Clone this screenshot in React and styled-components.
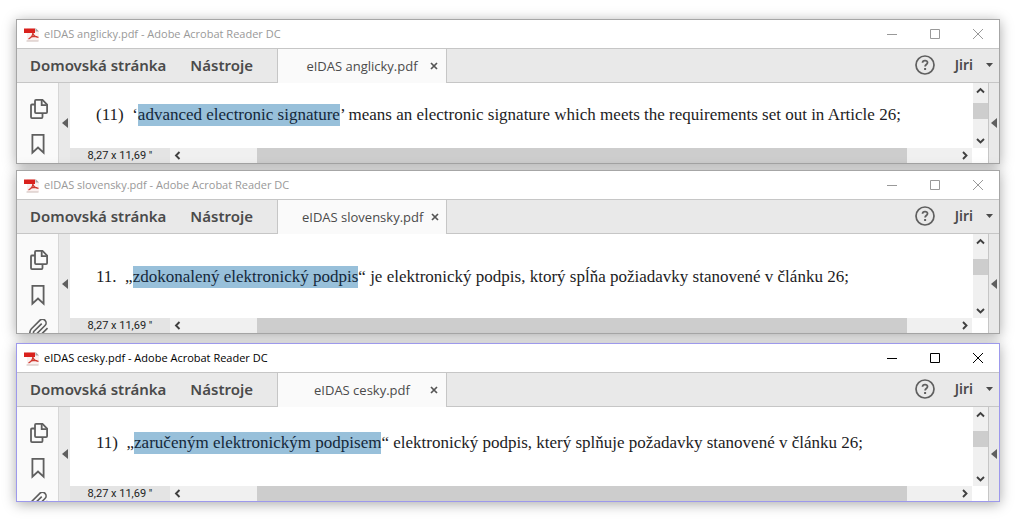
import React from 'react';
import styled, {createGlobalStyle, css} from 'styled-components';

const ui = '"Noto Sans", "Open Sans", sans-serif';
const uiNarrow = '"Open Sans", "Noto Sans", sans-serif';
const serif = '"Liberation Serif", "Times New Roman", serif';

const GlobalStyle = createGlobalStyle`
  * {
    box-sizing: border-box;
  }

  body {
    margin: 0;
    background: #fff;
    font-family: ${ui};
  }

  button {
    padding: 0;
    border: 0;
    background: none;
    color: inherit;
    font: inherit;
  }
`;

const Desktop = styled.main`
  display: flex;
  flex-direction: column;
  padding: 19px 24px 24px 16px;
`;

const Window = styled.section`
  display: flex;
  flex-direction: column;
  margin-bottom: ${props => props.$gap || 0}px;
  border: 1px solid ${props => (props.$active ? '#9d99ec' : '#a6a6a6')};
  background: #fff;
  box-shadow: 0 2px 12px rgba(0, 0, 0, 0.34);
`;

const TitleBar = styled.header`
  display: flex;
  align-items: center;
  height: 28px;
  padding-left: 7px;
  color: ${props => (props.$active ? '#000' : '#999')};
`;

const Title = styled.h1`
  flex: 1;
  margin: 0 0 0 3px;
  font: 400 11px/16px ${uiNarrow};
  white-space: nowrap;
`;

const ControlButton = styled.button`
  display: flex;
  align-items: center;
  justify-content: center;
  width: 43px;
  height: 28px;
`;

const MenuBar = styled.nav`
  display: flex;
  height: 35px;
  border-top: 1px solid #c6c6c6;
  background: #e9e9e9;
  color: #4b4b4b;
`;

const MenuGroup = styled.div`
  display: flex;
  gap: 24px;
  align-items: center;
  padding: 0 24px 2px 13px;
  border-bottom: 1px solid #c6c6c6;
`;

const MenuButton = styled.button`
  font: 600 15px/20px ${ui};
  white-space: nowrap;
`;

const Tab = styled.div`
  display: grid;
  grid-template-columns: 24px 1fr 24px;
  align-items: center;
  width: 170px;
  border: solid #c6c6c6;
  border-width: 0 1px;
  background: #fafafa;
`;

const TabLabel = styled.button`
  grid-column: 2;
  font: 13px/20px ${uiNarrow};
  white-space: nowrap;
`;

const TabClose = styled.button`
  display: flex;
  justify-content: center;
`;

const Account = styled.div`
  display: flex;
  flex: 1;
  gap: 20px;
  align-items: center;
  justify-content: flex-end;
  padding: 0 6px 1px 0;
  border-bottom: 1px solid #c6c6c6;
`;

const HelpButton = styled.button`
  display: flex;
`;

const UserButton = styled.button`
  display: flex;
  gap: 13px;
  align-items: center;
  font: 600 14px/20px ${ui};
`;

const Body = styled.div`
  display: flex;
`;

// Sized by the document beside it, so tools that don't fit are cut off.
const ToolRail = styled.aside`
  display: flex;
  flex-direction: column;
  gap: 13px;
  align-items: flex-start;
  width: 42px;
  padding: 15px 0 0 12px;
  overflow: hidden;
  contain: size;
  border-right: 1px solid #d6d6d6;
  background: #fafafa;
  color: #5f5f5f;
`;

const ToolButton = styled.button`
  display: flex;
  flex-shrink: 0;
`;

const PanelToggle = styled.button`
  display: flex;
  align-items: center;
  justify-content: center;
  width: 11px;
  background: #e9e9e9;
  color: #5f5f5f;

  ${props =>
    props.$bordered &&
    css`
      border-left: 1px solid #c6c6c6;
    `};
`;

const Viewer = styled.div`
  display: flex;
  flex: 1;
  flex-direction: column;
  min-width: 0;
`;

const Document = styled.div`
  display: flex;
`;

const Page = styled.p`
  flex: 1;
  min-width: 0;
  margin: 0;
  padding: ${props => props.$top}px 0 ${props => props.$bottom}px 26px;
  overflow: hidden;
  color: #1c1c24;
  font: 17px/22px ${serif};
  white-space: pre;
`;

const Highlight = styled.mark`
  display: inline-block;
  background: #98c0da;
  color: #14283a;
`;

const VerticalScroll = styled.div`
  display: flex;
  flex-direction: column;
  width: 15px;
  background: #f0f0f0;
`;

const VerticalTrack = styled.div`
  flex: 1;
  padding-top: ${props => props.$offset}px;
`;

const VerticalThumb = styled.div`
  height: 16px;
  background: #cdcdcd;
`;

const ScrollButton = styled.button`
  display: flex;
  align-items: center;
  justify-content: center;
  width: 15px;
  height: 15px;
  color: #404040;
`;

const StatusRow = styled.div`
  display: flex;
  padding-right: 16px;
`;

const PageSize = styled.div`
  width: 100px;
  background: #e4e4e4;
  color: #222;
  font: 11px/15px Roboto, sans-serif;
  text-align: center;
  white-space: nowrap;
`;

const HorizontalScroll = styled.div`
  display: flex;
  flex: 1;
  background: #f0f0f0;
`;

const HorizontalTrack = styled.div`
  display: grid;
  flex: 1;
  grid-template-columns: 72fr 650fr 50fr;
`;

const HorizontalThumb = styled.div`
  grid-column: 2;
  background: #cdcdcd;
`;

const PdfIcon = () => (
  <svg width="17" height="15" viewBox="0 0 17 15" fill="none">
    <path d="M3 1h8.500l3.500 3.500V14H3z" fill="#fbf1f0" />
    <path d="M2.500 14h12" stroke="#cdbcb8" />
    <path d="M11.500 1l3.500 3.500h-3.500z" fill="#a9a3a3" />
    <path d="M0 1.500h11v4.500H0z" fill="#d9201c" />
    <path
      d="M4.500 12c2.200-1.200 4.300-4 4.300-6 .5 2.200 2.700 4 5.700 4.300M6.200 10.500c2-1 4.500-1.400 7-1"
      stroke="#d0382f"
      strokeWidth="1.200"
    />
  </svg>
);

const MinimizeIcon = () => (
  <svg width="10" height="10" viewBox="0 0 10 10" stroke="currentColor">
    <path d="M0 5.500h10" />
  </svg>
);

const MaximizeIcon = () => (
  <svg width="10" height="10" viewBox="0 0 10 10" fill="none" stroke="currentColor">
    <path d="M.5.5h9v9h-9z" />
  </svg>
);

const CloseIcon = () => (
  <svg width="10" height="10" viewBox="0 0 10 10" stroke="currentColor">
    <path d="M0 0l10 10M10 0L0 10" />
  </svg>
);

const TabCloseIcon = () => (
  <svg width="8" height="8" viewBox="0 0 8 8" stroke="#555" strokeWidth="1.700">
    <path d="M1 1l6 6M7 1L1 7" />
  </svg>
);

const HelpIcon = () => (
  <svg width="20" height="20" viewBox="0 0 20 20" fill="none" stroke="#5f5f5f">
    <circle cx="10" cy="10" r="9" strokeWidth="1.700" />
    <path d="M7.500 7.700c.2-3 5.200-2.700 5 .1-.1 1.800-2.400 1.800-2.400 3.700" strokeWidth="1.800" />
    <path d="M9.100 13h2v2h-2z" fill="#5f5f5f" stroke="none" />
  </svg>
);

const CaretIcon = () => (
  <svg width="7" height="4" viewBox="0 0 7 4" fill="currentColor">
    <path d="M0 0h7L3.500 4z" />
  </svg>
);

const PagesIcon = () => (
  <svg width="20" height="22" viewBox="0 0 20 22" fill="none" stroke="currentColor" strokeWidth="1.800">
    <path d="M7 1.900h6.500l4.600 4.600v7.600c0 .6-.4 1-1 1H7c-.6 0-1-.4-1-1V2.900c0-.6.4-1 1-1z" />
    <path d="M12.700 2v5.200h5.200" />
    <path d="M6 6.500H3c-.6 0-1 .4-1 1v11.600c0 .6.4 1 1 1h9.500c.6 0 1-.4 1-1v-4" />
  </svg>
);

const BookmarkIcon = () => (
  <svg width="20" height="22" viewBox="0 0 20 22" fill="none" stroke="currentColor" strokeWidth="1.800">
    <path d="M3.400 1.900h11.200v17.800L9 14.500l-5.600 5.200z" />
  </svg>
);

const ClipIcon = () => (
  <svg width="20" height="20" viewBox="1 1 22 22" fill="none" stroke="currentColor" strokeWidth="1.800">
    <path d="M21.400 11l-9.200 9.200a6 6 0 0 1-8.500-8.500l9.200-9.200a4 4 0 0 1 5.700 5.700l-9.200 9.200a2 2 0 0 1-2.900-2.900l8.500-8.400" />
  </svg>
);

const PanelArrowIcon = () => (
  <svg width="6" height="10" viewBox="0 0 6 10" fill="currentColor">
    <path d="M6 0v10L0 5z" />
  </svg>
);

const CHEVRONS = {
  up: 'M1 6.500L4.500 3 8 6.500',
  down: 'M1 3l3.500 3.500L8 3',
  left: 'M6.500 1L3 4.500 6.500 8',
  right: 'M3 1l3.500 3.500L3 8'
};

const Chevron = ({direction}) => (
  <svg width="9" height="9" viewBox="0 0 9 9" fill="none" stroke="currentColor" strokeWidth="1.900">
    <path d={CHEVRONS[direction]} />
  </svg>
);

const WINDOWS = [
  {
    file: 'eIDAS anglicky.pdf',
    before: '(11)  ‘',
    marked: 'advanced electronic signature',
    after: '’ means an electronic signature which meets the requirements set out in Article 26;',
    top: 21,
    bottom: 22,
    thumb: 5,
    gap: 6
  },
  {
    file: 'eIDAS slovensky.pdf',
    before: '11.  „',
    marked: 'zdokonalený elektronický podpis',
    after: '“ je elektronický podpis, ktorý spĺňa požiadavky stanovené v článku 26;',
    top: 32,
    bottom: 30,
    thumb: 10,
    gap: 9
  },
  {
    file: 'eIDAS cesky.pdf',
    before: '11)  „',
    marked: 'zaručeným elektronickým podpisem',
    after: '“ elektronický podpis, který splňuje požadavky stanovené v článku 26;',
    top: 25,
    bottom: 32,
    thumb: 9,
    active: true
  }
];

const ReaderWindow = ({file, before, marked, after, top, bottom, thumb, gap, active}) => (
  <Window $active={active} $gap={gap}>
    <TitleBar $active={active}>
      <PdfIcon />
      <Title>{file} - Adobe Acrobat Reader DC</Title>
      <ControlButton aria-label="Minimize">
        <MinimizeIcon />
      </ControlButton>
      <ControlButton aria-label="Maximize">
        <MaximizeIcon />
      </ControlButton>
      <ControlButton aria-label="Close">
        <CloseIcon />
      </ControlButton>
    </TitleBar>

    <MenuBar>
      <MenuGroup>
        <MenuButton>Domovská stránka</MenuButton>
        <MenuButton>Nástroje</MenuButton>
      </MenuGroup>
      <Tab>
        <TabLabel>{file}</TabLabel>
        <TabClose aria-label="Close tab">
          <TabCloseIcon />
        </TabClose>
      </Tab>
      <Account>
        <HelpButton aria-label="Help">
          <HelpIcon />
        </HelpButton>
        <UserButton>
          Jiri <CaretIcon />
        </UserButton>
      </Account>
    </MenuBar>

    <Body>
      <ToolRail>
        <ToolButton aria-label="Page thumbnails">
          <PagesIcon />
        </ToolButton>
        <ToolButton aria-label="Bookmarks">
          <BookmarkIcon />
        </ToolButton>
        <ToolButton aria-label="Attachments">
          <ClipIcon />
        </ToolButton>
      </ToolRail>
      <PanelToggle aria-label="Toggle navigation pane">
        <PanelArrowIcon />
      </PanelToggle>
      <Viewer>
        <Document>
          <Page $top={top} $bottom={bottom}>
            {before}
            <Highlight>{marked}</Highlight>
            {after}
          </Page>
          <VerticalScroll>
            <ScrollButton aria-label="Scroll up">
              <Chevron direction="up" />
            </ScrollButton>
            <VerticalTrack $offset={thumb}>
              <VerticalThumb />
            </VerticalTrack>
            <ScrollButton aria-label="Scroll down">
              <Chevron direction="down" />
            </ScrollButton>
          </VerticalScroll>
        </Document>
        <StatusRow>
          <PageSize>8,27 x 11,69 "</PageSize>
          <HorizontalScroll>
            <ScrollButton aria-label="Scroll left">
              <Chevron direction="left" />
            </ScrollButton>
            <HorizontalTrack>
              <HorizontalThumb />
            </HorizontalTrack>
            <ScrollButton aria-label="Scroll right">
              <Chevron direction="right" />
            </ScrollButton>
          </HorizontalScroll>
        </StatusRow>
      </Viewer>
      <PanelToggle $bordered aria-label="Toggle tools pane">
        <PanelArrowIcon />
      </PanelToggle>
    </Body>
  </Window>
);

export default function App() {
  return (
    <Desktop>
      <GlobalStyle />
      {WINDOWS.map(item => (
        <ReaderWindow key={item.file} {...item} />
      ))}
    </Desktop>
  );
}
